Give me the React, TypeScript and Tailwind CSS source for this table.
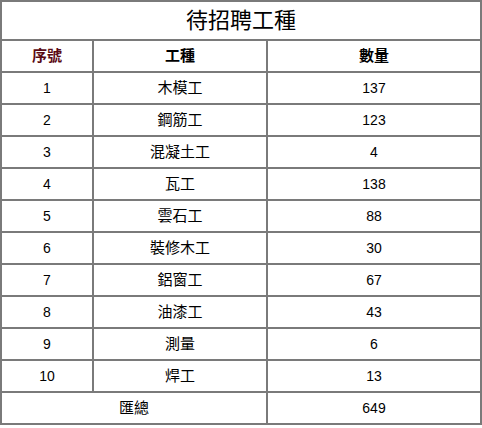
const ROWS: [number, string, number][] = [
  [1, "木模工", 137],
  [2, "鋼筋工", 123],
  [3, "混凝土工", 4],
  [4, "瓦工", 138],
  [5, "雲石工", 88],
  [6, "裝修木工", 30],
  [7, "鋁窗工", 67],
  [8, "油漆工", 43],
  [9, "測量", 6],
  [10, "焊工", 13],
];

const cell = "border-2 border-[#7a7a7a] text-center p-0";

export default function App() {
  const total = ROWS.reduce((s, r) => s + r[2], 0);
  return (
    <div className="w-[482px] h-[428px] bg-white font-['Liberation_Sans','Noto_Sans_CJK_TC',sans-serif] text-black">
      <table className="w-[482px] border-collapse table-fixed">
        <colgroup>
          <col className="w-[92px]" />
          <col className="w-[174px]" />
          <col />
        </colgroup>
        <tbody>
          <tr className="h-[39px]">
            <td colSpan={3} className={`${cell} text-[22px] font-normal`}>
              待招聘工種
            </td>
          </tr>
          <tr className="h-[32px]">
            <td className={`${cell} text-[15px] font-bold text-[#5a0a14]`}>序號</td>
            <td className={`${cell} text-[15px] font-bold`}>工種</td>
            <td className={`${cell} text-[15px] font-bold`}>數量</td>
          </tr>
          {ROWS.map(([n, name, qty]) => (
            <tr key={n} className="h-[32px]">
              <td className={`${cell} text-[14px]`}>{n}</td>
              <td className={`${cell} text-[15px]`}>{name}</td>
              <td className={`${cell} text-[14px]`}>{qty}</td>
            </tr>
          ))}
          <tr className="h-[32px]">
            <td colSpan={2} className={`${cell} text-[15px]`}>匯總</td>
            <td className={`${cell} text-[14px]`}>{total}</td>
          </tr>
        </tbody>
      </table>
    </div>
  );
}
